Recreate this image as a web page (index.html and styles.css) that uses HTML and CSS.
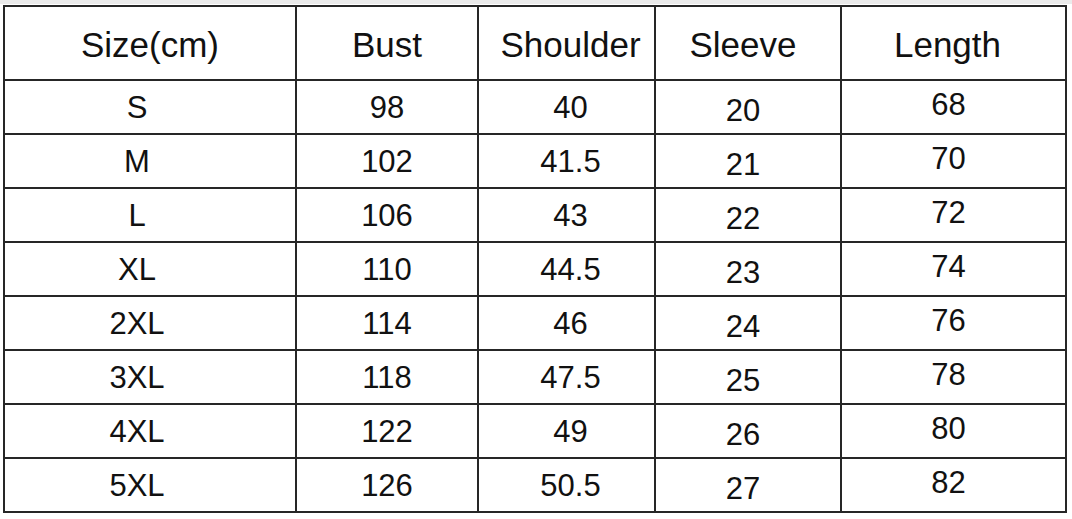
FILE: index.html
```html
<!DOCTYPE html>
<html lang="en">
<head>
<meta charset="utf-8">
<title>Size Chart</title>
<link rel="stylesheet" href="styles.css">
</head>
<body>
<div class="chart" role="table" aria-label="Size chart">
  <div class="cell head c-size" role="columnheader">Size(cm)</div>
  <div class="cell head c-bust" role="columnheader">Bust</div>
  <div class="cell head c-shoulder" role="columnheader">Shoulder</div>
  <div class="cell head c-sleeve" role="columnheader">Sleeve</div>
  <div class="cell head c-length" role="columnheader">Length</div>

  <div class="cell c-size">S</div><div class="cell c-bust">98</div><div class="cell c-shoulder">40</div><div class="cell c-sleeve">20</div><div class="cell c-length">68</div>
  <div class="cell c-size">M</div><div class="cell c-bust">102</div><div class="cell c-shoulder">41.5</div><div class="cell c-sleeve">21</div><div class="cell c-length">70</div>
  <div class="cell c-size">L</div><div class="cell c-bust">106</div><div class="cell c-shoulder">43</div><div class="cell c-sleeve">22</div><div class="cell c-length">72</div>
  <div class="cell c-size">XL</div><div class="cell c-bust">110</div><div class="cell c-shoulder">44.5</div><div class="cell c-sleeve">23</div><div class="cell c-length">74</div>
  <div class="cell c-size">2XL</div><div class="cell c-bust">114</div><div class="cell c-shoulder">46</div><div class="cell c-sleeve">24</div><div class="cell c-length">76</div>
  <div class="cell c-size">3XL</div><div class="cell c-bust">118</div><div class="cell c-shoulder">47.5</div><div class="cell c-sleeve">25</div><div class="cell c-length">78</div>
  <div class="cell c-size">4XL</div><div class="cell c-bust">122</div><div class="cell c-shoulder">49</div><div class="cell c-sleeve">26</div><div class="cell c-length">80</div>
  <div class="cell c-size">5XL</div><div class="cell c-bust">126</div><div class="cell c-shoulder">50.5</div><div class="cell c-sleeve">27</div><div class="cell c-length">82</div>
</div>
</body>
</html>
```

FILE: styles.css
```css
html, body {
  margin: 0;
  padding: 0;
  background: #ffffff;
}

body {
  border-top: 4px solid #ebebeb;
  padding: 1px 0 0 3px;
  font-family: "Liberation Sans", Arial, sans-serif;
  color: #111111;
}

.chart {
  display: grid;
  grid-template-columns: 290px 180px 175px 184px 223px;
  grid-template-rows: 72px repeat(8, 52px);
  gap: 2px;
  padding: 2px;
  width: max-content;
  background: #262626;
}

.cell {
  background: #ffffff;
  display: flex;
  align-items: center;
  justify-content: center;
  font-size: 31px;
  line-height: 1;
}

/* body-cell offsets per column */
.c-size { padding-right: 26px; }
.c-shoulder { padding-left: 8px; }
.c-sleeve { padding-right: 10px; padding-top: 6px; }
.c-length { padding-right: 10px; padding-bottom: 5px; }

/* header row */
.head {
  font-size: 35px;
  padding-top: 2px;
  padding-bottom: 0;
}

.head.c-size { padding-right: 0; }
.head.c-length { padding-right: 12px; }
```
